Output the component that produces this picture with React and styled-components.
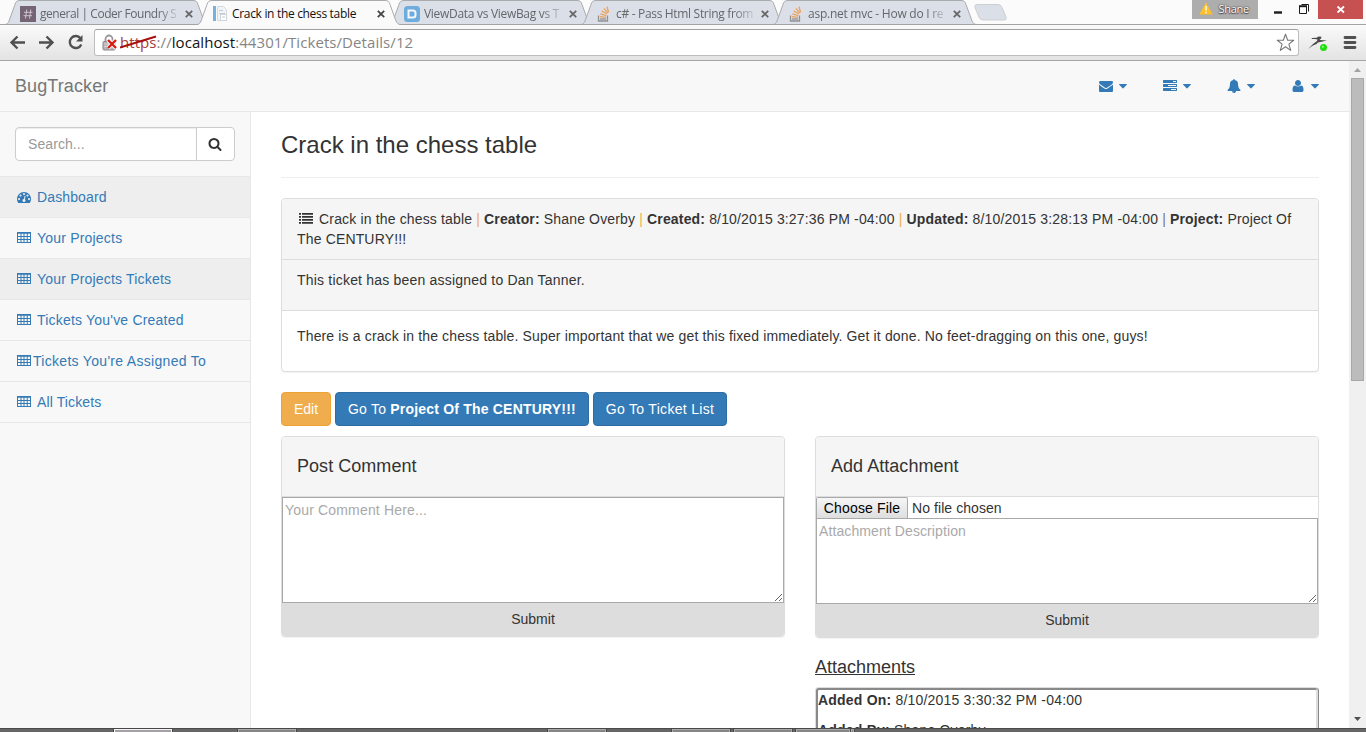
import React from "react";
import styled, { createGlobalStyle } from "styled-components";

const Global = createGlobalStyle`
  *, *::before, *::after { box-sizing: border-box; }
  html, body { margin: 0; overflow: hidden; }
  body {
    font: 14px/20px "Liberation Sans", Arial, sans-serif;
    color: #333;
    background: #fff;
  }
`;

const Window = styled.div`
  display: flex;
  flex-direction: column;
  width: 1366px;
  height: 732px;
  overflow: hidden;
`;

/* ---------- browser chrome ---------- */

const TabStrip = styled.div`
  display: flex;
  flex: none;
  height: 25px;
  padding-left: 5px;
  background: linear-gradient(#a3a3a3, #a3a3a3) 0 24px / 100% 1px no-repeat #fbfbfb;
  font-family: "Open Sans", "Noto Sans", sans-serif;
`;

const TabBox = styled.div`
  position: relative;
  z-index: ${(p) => (p.$active ? 2 : 1)};
  flex: none;
  display: flex;
  align-items: center;
  width: 205px;
  height: 25px;
  margin-right: -13px;
  padding: 2px 0 0 15px;
`;

const TabShape = styled.svg`
  position: absolute;
  inset: 0;
  z-index: -1;
`;

const Favicon = styled.svg`
  flex: none;
  width: 16px;
  height: 16px;
  margin-right: 4px;
  opacity: ${(p) => (p.$dim ? 0.75 : 1)};
`;

const TabTitle = styled.span`
  flex: none;
  width: 140px;
  overflow: hidden;
  white-space: nowrap;
  font-size: 12px;
  line-height: 18px;
  letter-spacing: ${(p) => p.$spacing};
  color: ${(p) => (p.$active ? "#111" : "#64676b")};
  mask-image: ${(p) => (p.$active ? "none" : "linear-gradient(90deg, #000 118px, transparent 142px)")};
`;

const TabClose = styled.svg`
  flex: none;
  width: 8px;
  height: 8px;
  margin-left: 5px;
`;

const NewTab = styled.svg`
  flex: none;
  width: 34px;
  height: 18px;
  margin: 4px 0 0 8px;
`;

const Caption = styled.div`
  display: flex;
  margin-left: auto;
  height: 19px;
`;

const Profile = styled.div`
  display: flex;
  align-items: center;
  justify-content: space-between;
  width: 66px;
  padding: 0 9px 2px 7px;
  background: #adadad;
  color: #fff;
  font-size: 11px;
  letter-spacing: -0.25px;
  text-shadow: 0 0 2px #333, 0 0 1px #555, 0 1px 1px #555;
`;

const CaptionIcon = styled.svg`
  width: ${(p) => p.$w}px;
  height: 19px;
`;

const Toolbar = styled.div`
  display: flex;
  flex: none;
  align-items: center;
  height: 36px;
  padding: 0 8px 0 9px;
  border-bottom: 1px solid #a5a5a5;
  background: linear-gradient(#fafafa, #e3e3e3);
`;

const ToolIcons = styled.svg`
  flex: none;
  width: 85px;
  height: 35px;
`;

const Omnibox = styled.div`
  display: flex;
  align-items: center;
  width: 1205px;
  height: 27px;
  padding: 0 3px 0 7px;
  border: 1px solid #bdbdbd;
  border-top-color: #9f9f9f;
  border-radius: 3px;
  background: #fff;
  font: 15px/24px "Open Sans", "Noto Sans", sans-serif;
`;

const Lock = styled.svg`
  flex: none;
  width: 18px;
  height: 18px;
`;

const Url = styled.span`
  position: relative;
  flex: 1;
  margin-bottom: 2px;
  color: #858585;
  white-space: nowrap;
  letter-spacing: 0.07px;
`;

const Scheme = styled.span`
  color: #a63c3c;
`;

const Host = styled.span`
  color: #111;
`;

const Strike = styled.svg`
  position: absolute;
  left: 0;
  top: 4px;
  width: 38px;
  height: 16px;
`;

const RightTools = styled.svg`
  flex: none;
  width: 59px;
  height: 35px;
`;

function Tab({ title, active, spacing, icon }) {
  return (
    <TabBox $active={active}>
      <TabShape width="205" height="25" viewBox="0 0 205 25">
        <path
          d="M0 25 C2.500 24.500 3.200 23 4 21 L10 4.500 C11 1.500 12 .5 15 .5 H188 C191 .5 192 1.500 193 4.500 L199 21 C200 23 201 24.500 204 25 Z"
          fill={active ? "#fafafa" : "#dbdfe7"}
        />
        <path
          d="M0 24.500 C2.500 24 3.200 23 4 21 L10 4.500 C11 1.500 12 .5 15 .5 H188 C191 .5 192 1.500 193 4.500 L199 21 C200 23 201 24.500 204 24.500"
          fill="none"
          stroke="#aaabae"
        />
        {!active && <path d="M0 24.500H205" stroke="#a3a3a3" />}
      </TabShape>
      <Favicon viewBox="0 0 16 16" $dim={!active}>{icon}</Favicon>
      <TabTitle $active={active} $spacing={spacing}>{title}</TabTitle>
      <TabClose viewBox="0 0 8 8">
        <path d="M.8.8l6.400 6.400M7.200.8L.8 7.200" stroke={active ? "#444" : "#666"} strokeWidth="1.800" />
      </TabClose>
    </TabBox>
  );
}

const hashIcon = (
  <g>
    <rect width="16" height="16" fill="#543a51" />
    <path d="M6.800 3.500l-1.300 9M10.800 3.500l-1.300 9M4 6.300h8.500M3.500 9.700H12" stroke="#c9b9c6" fill="none" />
  </g>
);
const pageIcon = (
  <g>
    <rect x="1" width="3" height="15" fill="#74b2e0" />
    <path d="M5.500.5h6l3 3v11h-9z" fill="#f1f4f7" stroke="#d3dae1" />
    <path d="M7 4.500h4M7 7.500h6" stroke="#c3cbd4" />
    <path d="M8.500 8.500h6v6h-6z" fill="#fff" stroke="#ccd3da" />
    <path d="M10 11h3" stroke="#c3cbd4" />
  </g>
);
const dIcon = (
  <g>
    <rect width="16" height="16" rx="3.500" fill="#4a9bdc" />
    <path d="M4.500 4.500h4.500a2.500 2.500 0 0 1 2.500 2.500v2a2.500 2.500 0 0 1-2.500 2.500H4.500z" fill="none" stroke="#fff" strokeWidth="2" />
  </g>
);
const stackIcon = (
  <g fill="none">
    <path d="M2.500 9.500v5.500h9V9.500" stroke="#777" strokeWidth="1.300" />
    <path d="M4 13h6" stroke="#777" strokeWidth="1.300" />
    <path d="M4 10.700l6 .6M4.400 7.800l5.800 1.800M5.600 4.800l5.200 3.200M8 2.300l3.800 4.800M11 .8l1.600 5.600" stroke="#f28b30" strokeWidth="1.300" />
  </g>
);

function Chrome() {
  return (
    <>
      <TabStrip>
        <Tab title="general | Coder Foundry S" spacing="-0.45px" icon={hashIcon} />
        <Tab active title="Crack in the chess table" spacing="-0.32px" icon={pageIcon} />
        <Tab title="ViewData vs ViewBag vs T" spacing="-0.3px" icon={dIcon} />
        <Tab title="c# - Pass Html String from" spacing="-0.32px" icon={stackIcon} />
        <Tab title="asp.net mvc - How do I re" spacing="-0.25px" icon={stackIcon} />
        <NewTab viewBox="0 0 34 18">
          <path d="M4 .5h21q3 0 4 3l4 9.500q1 3-2 3H10q-3 0-4-3L2 3.500Q1 .5 4 .5z" fill="#dbdfe7" stroke="#ccced2" />
        </NewTab>
        <Caption>
          <Profile>
            <svg width="14" height="13" viewBox="0 0 14 13">
              <path d="M7 .5L13.700 12.500H.3z" fill="#fdc02a" />
              <path d="M7 4v4.500M7 9.700v1.500" stroke="#fff" strokeWidth="1.400" />
            </svg>
            Shane
          </Profile>
          <CaptionIcon $w={60} viewBox="0 0 60 19">
            <path d="M16 12.500h8" stroke="#1b1b1b" strokeWidth="2.400" />
            <path d="M41.500 6.500h7v7h-7z" fill="none" stroke="#1b1b1b" />
            <path d="M41 6.200h8" stroke="#1b1b1b" strokeWidth="2" />
            <path d="M43.500 4.500h7v7" fill="none" stroke="#1b1b1b" />
          </CaptionIcon>
          <CaptionIcon $w={48} viewBox="0 0 48 19">
            <rect width="45" height="19" fill="#c75050" />
            <path d="M19.500 6.500l6.500 6M26 6.500l-6.500 6" stroke="#fff" strokeWidth="1.800" />
          </CaptionIcon>
        </Caption>
      </TabStrip>
      <Toolbar>
        <ToolIcons viewBox="0 0 85 35" fill="none" stroke="#505050" strokeWidth="2.400">
          <path d="M2.500 17.500H16M8.500 11.500l-6 6 6 6" />
          <path d="M30 17.500h13.500M37.500 11.500l6 6-6 6" />
          <path d="M71.500 13.300A6 6 0 1 0 72.300 19.500" />
          <path d="M73.500 10v6.500H67z" fill="#505050" stroke="none" />
        </ToolIcons>
        <Omnibox>
          <Lock viewBox="0 0 18 18">
            <path d="M3.500 8V5a3.500 3.500 0 0 1 7 0v3" fill="none" stroke="#999" strokeWidth="1.800" />
            <rect x="1" y="7.500" width="12" height="8.500" rx="1" fill="#b5b5b5" stroke="#8b8b8b" />
            <path d="M2 10h9M2 12.500h9" stroke="#d2d2d2" />
            <path d="M6 6l8 8M14 6l-8 8" stroke="#fff" strokeWidth="4" />
            <path d="M6 6l8 8M14 6l-8 8" stroke="#d81a10" strokeWidth="2.400" />
          </Lock>
          <Url>
            <Scheme>https</Scheme>://<Host>localhost</Host>:44301/Tickets/Details/12
            <Strike viewBox="0 0 38 16">
              <path d="M0 13.500L36 2.500" stroke="#a90e0e" strokeWidth="2" />
            </Strike>
          </Url>
          <svg width="19" height="19" viewBox="0 0 19 19">
            <path d="M9.500 1.200l2.200 6h6l-4.800 3.900 1.800 6.300-5.200-3.700-5.200 3.700 1.800-6.300L1.300 7.200h6z" fill="#fff" stroke="#777" strokeWidth="1.100" strokeLinejoin="round" />
          </svg>
        </Omnibox>
        <RightTools viewBox="0 0 59 35">
          <path d="M9 24l5-5 4-3 .5-1.500-2.500-.5h-3.500l.5-1 4.500-.2 2-1.300 3 .3-.5 1.700-1.500 1.500 7.500.5-5.500 1.300-3.500.7-1.500 1.500-4 1.800z" fill="#4a4a4a" />
          <circle cx="24.500" cy="22.500" r="3.500" fill="#20dd10" />
          <circle cx="23.800" cy="21.700" r="1" fill="#9dfb8c" />
          <path d="M46 12.500h10M46 17.500h10M46 22.500h10" stroke="#505050" strokeWidth="2.800" strokeLinecap="round" />
        </RightTools>
      </Toolbar>
    </>
  );
}

/* ---------- icons of the site ---------- */

const PATHS = {
  envelope:
    "M1792 710v794q0 66-47 113t-113 47h-1472q-66 0-113-47t-47-113v-794q44 49 101 87 362 246 497 345 57 42 92.500 65.500t94.500 48 110 24.500h2q51 0 110-24.500t94.500-48 92.500-65.500q170-123 498-345 57-39 100-87zm0-294q0 79-49 151t-122 123q-376 261-468 325-10 7-42.500 31t-54 38.800-52 32.500-57.500 27-50 9h-2q-23 0-50-9t-57.500-27-52-32.500-54-38.800-42.500-31q-91-64-262-182.500t-205-142.500q-62-42-117-115.500t-55-136.500q0-78 41.500-130t118.500-52h1472q65 0 112.500 47t47.500 113z",
  tasks:
    "M1024 1408h640v-128h-640v128zm-384-512h1024v-128h-1024v128zm640-512h384v-128h-384v128zm512 832v256q0 26-19 45t-45 19h-1664q-26 0-45-19t-19-45v-256q0-26 19-45t45-19h1664q26 0 45 19t19 45zm0-512v256q0 26-19 45t-45 19h-1664q-26 0-45-19t-19-45v-256q0-26 19-45t45-19h1664q26 0 45 19t19 45zm0-512v256q0 26-19 45t-45 19h-1664q-26 0-45-19t-19-45v-256q0-26 19-45t45-19h1664q26 0 45 19t19 45z",
  bell:
    "M912 1696q0-16-16-16-59 0-101.500-42.500t-42.500-101.500q0-16-16-16t-16 16q0 73 51.500 124.500t124.500 51.500q16 0 16-16zm816-288q0 52-38 90t-90 38h-448q0 106-75 181t-181 75-181-75-75-181h-448q-52 0-90-38t-38-90q50-42 91-88t85-119.500 74.500-158.500 50-206 19.500-260q0-152 117-282.500t307-158.500q-8-19-8-39 0-40 28-68t68-28 68 28 28 68q0 20-8 39 190 28 307 158.500t117 282.500q0 139 19.500 260t50 206 74.500 158.500 85 119.500 91 88z",
  user:
    "M1600 1399q0 109-62.500 187t-150.500 78h-982q-88 0-150.500-78t-62.500-187q0-85 8.500-160.500t31.500-152 58.500-131 94-89 134.500-34.500q195 128 377 128t377-128q76 0 134.500 34.500t94 89 58.500 131 31.500 152 8.500 160.500zm-320-887q0 159-112.500 271.500t-271.500 112.500-271.500-112.500-112.500-271.500 112.500-271.500 271.500-112.500 271.500 112.500 112.500 271.500z",
  search:
    "M1216 832q0-185-131.500-316.500t-316.500-131.500-316.500 131.500-131.500 316.500 131.500 316.500 316.500 131.500 316.500-131.500 131.500-316.500zm512 832q0 52-38 90t-90 38q-54 0-90-38l-343-342q-179 124-399 124-143 0-273.500-55.500t-225-150-150-225-55.500-273.500 55.500-273.500 150-225 225-150 273.500-55.500 273.500 55.500 225 150 150 225 55.500 273.500q0 220-124 399l343 343q37 37 37 90z",
  dashboard:
    "M384 1152q0-53-37.500-90.500t-90.500-37.500-90.500 37.500-37.500 90.500 37.500 90.500 90.500 37.500 90.500-37.500 37.500-90.500zm192-448q0-53-37.500-90.500t-90.500-37.500-90.500 37.500-37.500 90.500 37.500 90.500 90.500 37.500 90.500-37.500 37.500-90.500zm428 481l101-382q6-26-7.500-48.500t-38.500-29.500-48 6.500-30 39.500l-101 382q-60 5-107 43.500t-63 98.500q-20 77 20 146t117 89 146-20 89-117q16-60-6-117t-72-91zm660-33q0-53-37.500-90.500t-90.500-37.500-90.500 37.500-37.500 90.500 37.500 90.500 90.500 37.500 90.500-37.500 37.500-90.500zm-640-640q0-53-37.500-90.500t-90.500-37.500-90.500 37.500-37.500 90.500 37.500 90.500 90.500 37.500 90.500-37.500 37.500-90.500zm448 192q0-53-37.500-90.500t-90.500-37.500-90.500 37.500-37.500 90.500 37.500 90.500 90.500 37.500 90.500-37.500 37.500-90.500zm320 448q0 261-141 483-19 29-54 29h-1402q-35 0-54-29-141-221-141-483 0-182 71-348t191-286 286-191 348-71 348 71 286 191 191 286 71 348z",
  table:
    "M0 256h1792v1408H0zM128 480v288h320V480zm448 0v288h256V480zm384 0v288h288V480zm416 0v288h288V480zM128 896v256h320V896zm448 0v256h256V896zm384 0v256h288V896zm416 0v256h288V896zM128 1280v256h320v-256zm448 0v256h256v-256zm384 0v256h288v-256zm416 0v256h288v-256z",
  list:
    "M0 256h256v224H0zM384 256h1408v224H384zM0 640h256v224H0zM384 640h1408v224H384zM0 1024h256v224H0zM384 1024h1408v224H384zM0 1408h256v224H0zM384 1408h1408v224H384z",
};

const Glyph = styled.svg`
  width: 14px;
  height: 14px;
  margin: ${(p) => p.$margin || "0 2px"};
  flex: none;
  fill: currentColor;
  vertical-align: -1px;
`;

function Icon({ name, margin }) {
  return (
    <Glyph viewBox="0 0 1792 1792" $margin={margin}>
      <path fillRule="evenodd" d={PATHS[name]} />
    </Glyph>
  );
}

const Caret = styled.svg`
  width: 8px;
  height: 5px;
  margin-left: 4px;
  fill: currentColor;
`;

/* ---------- page ---------- */

const Viewport = styled.div`
  display: flex;
  flex: 1;
  min-height: 0;
  overflow: hidden;
`;

const Page = styled.div`
  display: flex;
  flex-direction: column;
  width: 1349px;
  min-height: 0;
`;

const Navbar = styled.nav`
  display: flex;
  flex: none;
  align-items: center;
  justify-content: space-between;
  height: 51px;
  padding: 0 30px 0 15px;
  border-bottom: 1px solid #e7e7e7;
  background: #f8f8f8;
`;

const Brand = styled.a`
  font-size: 18px;
  letter-spacing: 0.1px;
  color: #777;
`;

const NavLinks = styled.div`
  display: flex;
  gap: 34px;
  color: #337ab7;
`;

const NavLink = styled.a`
  display: flex;
  align-items: center;
  height: 20px;
`;

const Body = styled.div`
  display: flex;
  flex: 1;
  min-height: 0;
`;

const Sidebar = styled.aside`
  flex: none;
  width: 251px;
  border-right: 1px solid #e7e7e7;
  background: #f8f8f8;
`;

const SearchRow = styled.div`
  display: flex;
  height: 65px;
  padding: 15px;
  border-bottom: 1px solid #e7e7e7;
`;

const SearchInput = styled.input`
  width: 182px;
  height: 34px;
  padding: 6px 12px;
  border: 1px solid #ccc;
  border-radius: 4px 0 0 4px;
  background: #fff;
  box-shadow: inset 0 1px 1px rgba(0, 0, 0, 0.075);
  font: inherit;
  letter-spacing: 0.08px;
  &::placeholder { color: #999; }
`;

const SearchButton = styled.button`
  display: flex;
  align-items: center;
  justify-content: center;
  width: 39px;
  height: 34px;
  margin-left: -1px;
  padding: 0;
  border: 1px solid #ccc;
  border-radius: 0 4px 4px 0;
  background: #fff;
  color: #333;
`;

const SideLink = styled.a`
  display: flex;
  align-items: center;
  gap: ${(p) => (p.$tight ? 0 : 4)}px;
  height: 41px;
  padding: 0 15px;
  border-bottom: 1px solid #e7e7e7;
  background: ${(p) => (p.$active ? "#eee" : "transparent")};
  color: #337ab7;
  letter-spacing: ${(p) => p.$spacing}px;
  svg { margin-bottom: ${(p) => (p.$raised ? 2 : 0)}px; }
`;

const Main = styled.main`
  flex: 1;
  padding: 0 30px;
  background: #fff;
  overflow: hidden;
`;

const Title = styled.h1`
  height: 66px;
  margin: 0 0 20px;
  padding-top: 20px;
  border-bottom: 1px solid #eee;
  font-size: 24px;
  line-height: 26px;
  font-weight: 400;
`;

const Panel = styled.section`
  margin-bottom: 20px;
  border: 1px solid #ddd;
  border-radius: 4px;
  background: #fff;
  box-shadow: 0 1px 1px rgba(0, 0, 0, 0.05);
  overflow: hidden;
`;

const PanelHeading = styled.div`
  padding: ${(p) => (p.$note ? "10px 15px 20px" : "10px 15px")};
  border-bottom: 1px solid #ddd;
  background: #f5f5f5;
  letter-spacing: ${(p) => (p.$note ? 0.2 : 0.155)}px;
`;

const PanelBody = styled.div`
  padding: 15px 15px 25px;
  letter-spacing: 0.145px;
`;

const Bar = styled.span`
  color: ${(p) => (p.$gray ? "#777" : "#f0ad4e")};
`;

const Buttons = styled.div`
  display: flex;
  gap: 4px;
  margin-bottom: 10px;
`;

const Button = styled.button`
  height: 34px;
  padding: 0;
  width: ${(p) => p.$w}px;
  border: 1px solid ${(p) => (p.$warning ? "#eea236" : "#2e6da4")};
  border-radius: 4px;
  background: ${(p) => (p.$warning ? "#f0ad4e" : "#337ab7")};
  color: #fff;
  font: inherit;
  letter-spacing: ${(p) => p.$spacing || 0}px;
  white-space: nowrap;
`;

const Columns = styled.div`
  display: grid;
  grid-template-columns: 504px 504px;
  gap: 30px;
  align-items: start;
`;

const FormHeading = styled.h2`
  height: 60px;
  margin: 0;
  padding: 19px 15px 0;
  border-bottom: 1px solid #ddd;
  background: #f5f5f5;
  font-size: 18px;
  line-height: 20px;
  font-weight: 400;
  letter-spacing: 0.04px;
`;

const TextArea = styled.textarea`
  display: block;
  width: 100%;
  height: ${(p) => p.$h}px;
  padding: 2px;
  border: 1px solid #a9a9a9;
  border-radius: 0;
  background: #fff;
  font: inherit;
  letter-spacing: ${(p) => p.$spacing}px;
  &::placeholder { color: #a9a9a9; }
`;

const Submit = styled.button`
  display: block;
  width: 100%;
  height: 33px;
  padding: 0 0 1px;
  border: 0;
  background: #ddd;
  color: #333;
  font: inherit;
`;

const FileRow = styled.div`
  display: flex;
  align-items: center;
  gap: 4px;
  height: 21px;
  letter-spacing: 0.07px;
`;

const FileButton = styled.button`
  width: 92px;
  height: 21px;
  padding: 0;
  border: 1px solid #a9a9a9;
  border-bottom: 0;
  border-radius: 2px 2px 0 0;
  background: linear-gradient(#f6f6f6, #dedede);
  color: #000;
  font: inherit;
  letter-spacing: 0.15px;
  line-height: 19px;
`;

const ListHeading = styled.h3`
  margin: -1px 0 10px;
  font-size: 18px;
  line-height: 20px;
  font-weight: 400;
  text-decoration: underline;
`;

const Attachment = styled.div`
  height: 120px;
  border: 3px ridge #ddd;
  border-radius: 4px;
  letter-spacing: 0.2px;
  p { margin: 0 0 10px; }
`;

const Scrollbar = styled.div`
  display: flex;
  flex-direction: column;
  align-items: center;
  width: 17px;
  background: #f0f0f0;
`;

const ScrollThumb = styled.div`
  width: 13px;
  height: 303px;
  margin-bottom: auto;
  border: 1px solid #a8a8a8;
  background: #bcbcbc;
`;

const Arrow = styled.svg`
  flex: none;
  width: 17px;
  height: 17px;
`;

const Taskbar = styled.div`
  display: flex;
  flex: none;
  height: 4px;
  padding-left: 114px;
  border-top: 1px solid #4a4a4a;
  background: #666;
`;

const TaskItem = styled.div`
  width: ${(p) => p.$w}px;
  height: 3px;
  margin-right: ${(p) => p.$gap}px;
  border: 1px solid ${(p) => (p.$active ? "#f5f5f5" : "#aaa")};
  border-bottom: 0;
  background: ${(p) => (p.$active ? "#a5a0a5" : "#858585")};
  box-shadow: 0 0 0 1px #484848;
`;

const NAV = ["envelope", "tasks", "bell", "user"];
const SIDE = [
  { icon: "dashboard", label: "Dashboard", active: true, spacing: 0.13 },
  { icon: "table", label: "Your Projects", spacing: 0.2 },
  { icon: "table", label: "Your Projects Tickets", active: true, spacing: 0.19 },
  { icon: "table", label: "Tickets You've Created", spacing: 0.2 },
  { icon: "table", label: "Tickets You're Assigned To", tight: true, spacing: 0.3 },
  { icon: "table", label: "All Tickets", spacing: 0.12 },
];

export default function App() {
  return (
    <Window>
      <Global />
      <Chrome />
      <Viewport>
        <Page>
          <Navbar>
            <Brand>BugTracker</Brand>
            <NavLinks>
              {NAV.map((name) => (
                <NavLink key={name}>
                  <Icon name={name} />
                  <Caret viewBox="0 0 8 5"><path d="M.5 0h7q.8.2.3.8L4.400 4.300q-.4.3-.8 0L.2.800Q-.3.2.5 0z" /></Caret>
                </NavLink>
              ))}
            </NavLinks>
          </Navbar>
          <Body>
            <Sidebar>
              <SearchRow>
                <SearchInput placeholder="Search..." />
                <SearchButton><Icon name="search" margin="0 1px 0 0" /></SearchButton>
              </SearchRow>
              {SIDE.map((s) => (
                <SideLink
                  key={s.label}
                  $active={s.active}
                  $tight={s.tight}
                  $spacing={s.spacing}
                  $raised={s.icon === "table"}
                >
                  <Icon name={s.icon} />
                  {s.label}
                </SideLink>
              ))}
            </Sidebar>
            <Main>
              <Title>Crack in the chess table</Title>
              <Panel>
                <PanelHeading>
                  <Icon name="list" /> Crack in the chess table <Bar>|</Bar> <b>Creator:</b> Shane Overby <Bar>|</Bar>{" "}
                  <b>Created:</b> 8/10/2015 3:27:36 PM -04:00 <Bar>|</Bar> <b>Updated:</b> 8/10/2015 3:28:13 PM -04:00{" "}
                  <Bar $gray>|</Bar> <b>Project:</b> Project Of The CENTURY!!!
                </PanelHeading>
                <PanelHeading $note>This ticket has been assigned to Dan Tanner.</PanelHeading>
                <PanelBody>
                  There is a crack in the chess table. Super important that we get this fixed immediately. Get it done. No
                  feet-dragging on this one, guys!
                </PanelBody>
              </Panel>
              <Buttons>
                <Button $warning $w={50}>Edit</Button>
                <Button $w={254} $spacing={0.2}>Go To <b>Project Of The CENTURY!!!</b></Button>
                <Button $w={134} $spacing={0.3}>Go To Ticket List</Button>
              </Buttons>
              <Columns>
                <Panel>
                  <FormHeading>Post Comment</FormHeading>
                  <TextArea $h={106} $spacing={0.17} placeholder="Your Comment Here..." />
                  <Submit>Submit</Submit>
                </Panel>
                <div>
                  <Panel>
                    <FormHeading>Add Attachment</FormHeading>
                    <FileRow>
                      <FileButton>Choose File</FileButton>
                      No file chosen
                    </FileRow>
                    <TextArea $h={86} $spacing={0.1} placeholder="Attachment Description" />
                    <Submit>Submit</Submit>
                  </Panel>
                  <ListHeading>Attachments</ListHeading>
                  <Attachment>
                    <p><b>Added On:</b> 8/10/2015 3:30:32 PM -04:00</p>
                    <p><b>Added By:</b> Shane Overby</p>
                  </Attachment>
                </div>
              </Columns>
            </Main>
          </Body>
        </Page>
        <Scrollbar>
          <Arrow viewBox="0 0 17 17"><path d="M5 11l3.500-4L12 11z" fill="#a3a3a3" /></Arrow>
          <ScrollThumb />
          <Arrow viewBox="0 0 17 17"><path d="M5 6h7l-3.500 4z" fill="#505050" /></Arrow>
        </Scrollbar>
      </Viewport>
      <Taskbar>
        <TaskItem $active $w={58} $gap={66} />
        <TaskItem $w={58} $gap={252} />
        <TaskItem $w={58} $gap={66} />
        <TaskItem $w={58} $gap={4} />
        <TaskItem $w={58} $gap={4} />
        <TaskItem $w={54} $gap={1} />
        <TaskItem $w={3} $gap={0} />
      </Taskbar>
    </Window>
  );
}
